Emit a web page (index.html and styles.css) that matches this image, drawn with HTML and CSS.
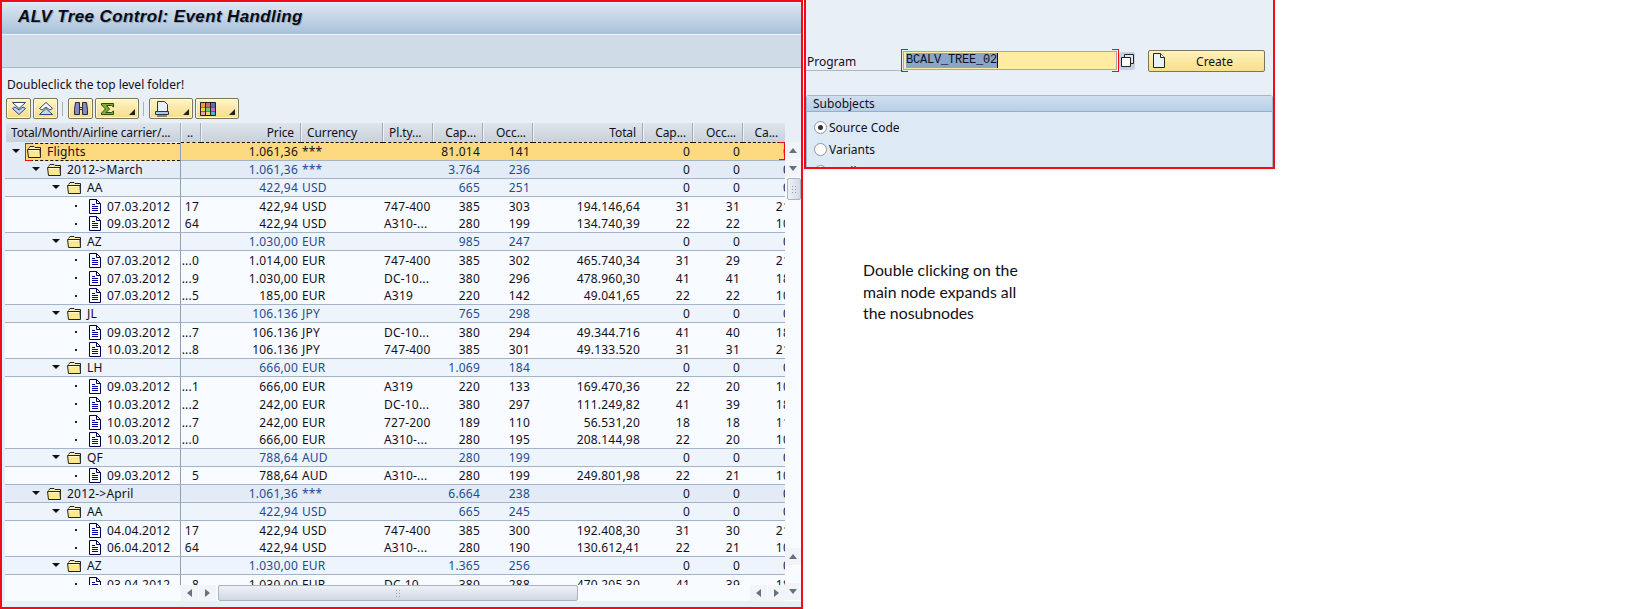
FILE: index.html
```html
<!DOCTYPE html>
<html lang="en">
<head>
  <meta charset="UTF-8">
  <title>ALV Tree Control: Event Handling</title>
  <link rel="stylesheet" href="styles.css">
</head>
<body>

<svg class="defs" width="0" height="0">
  <symbol id="folder" viewBox="0 0 15 13">
    <path d="M1.500 3.500 3 1.500h4l1 1h5.500v9" fill="#fdf0a8" stroke="#222"/>
    <path d="M.5 4.500h12.500l.5 8H1.500z" fill="#fde98c" stroke="#222"/>
    <path d="M2 5.500h10" stroke="#fffbd8"/>
  </symbol>
  <symbol id="doc" viewBox="0 0 12 15">
    <path d="M.5.5h7l4 4v10H.5z" fill="#fff" stroke="#00004e"/>
    <path d="M7.500.5v4h4" fill="none" stroke="#00004e"/>
    <path d="M3 5.500h3M3 7.500h6M3 9.500h6M3 11.500h6" fill="none" stroke="#0000a0"/>
  </symbol>
  <symbol id="drop" viewBox="0 0 6 6">
    <path d="M6 0v6H0z" fill="#222"/>
  </symbol>
</svg>

<div class="screen">
  <div class="titlebar">ALV Tree Control: Event Handling</div>
  <div class="appbar"></div>

  <div class="hint">Doubleclick the top level folder!</div>

  <div class="toolbar">
    <button class="tb"><svg width="16" height="15" viewBox="0 0 16 15"><path d="M1.500 1.500h13L8 7.500z" fill="#fff" stroke="#2c4a78"/><path d="M1.500 7.500 4 6l4 3 4-3 2.500 1.500L8 13.500z" fill="#c4d8ee" stroke="#2c4a78"/></svg></button>
    <button class="tb"><svg width="16" height="15" viewBox="0 0 16 15"><path d="M1.500 13.500h13L8 7.500z" fill="#c4d8ee" stroke="#2c4a78"/><path d="M1.500 7.500 4 9l4-3 4 3 2.500-1.500L8 1.500z" fill="#fff" stroke="#2c4a78"/></svg></button>
    <span class="sep"></span>
    <button class="tb"><svg width="16" height="15" viewBox="0 0 16 15"><path d="M2.500 1.500h4v12h-5v-5zM9.500 1.500h4l1 7v5h-5z" fill="#8489c4" stroke="#26264e"/><path d="M6.500 6.500h3v2h-3z" fill="#e4e6f6" stroke="#26264e"/></svg></button>
    <button class="tb tb-menu"><svg width="15" height="14" viewBox="0 0 15 14"><path d="M1.500 1.500h12v3.500l-2-1.500H6.500L9.500 7 6 10.500h5.500l2-1.500v3.500h-12v-1.500L5.500 7l-4-4z" fill="#7cb02e" stroke="#2c4a10"/></svg><svg class="drop"><use href="#drop"/></svg></button>
    <span class="sep"></span>
    <button class="tb tb-menu"><svg width="16" height="16" viewBox="0 0 16 16"><path d="M3.500.5h7l3 3v7h-10z" fill="#e8f0fa" stroke="#26364f"/><path d="M1.500 10.500h13v3h-13z" fill="#b6c8de" stroke="#26364f"/><path d="M3 15h10" stroke="#26364f"/></svg><svg class="drop"><use href="#drop"/></svg></button>
    <button class="tb tb-menu"><svg width="16" height="14" viewBox="0 0 16 14"><path d="M.5.500h15v13H.5z" fill="#222" stroke="#222"/><path d="M1 1h4v4H1z" fill="#f0a030"/><path d="M6 1h4v4H6z" fill="#c86a6a"/><path d="M11 1h4v4h-4z" fill="#5a6ac8"/><path d="M1 5.500h4v3.500H1z" fill="#f0d050"/><path d="M6 5.500h4v3.500H6z" fill="#70c870"/><path d="M11 5.500h4v3.500h-4z" fill="#c070c0"/><path d="M1 9.500h4V13H1z" fill="#f4a0a0"/><path d="M6 9.500h4V13H6z" fill="#e0e060"/><path d="M11 9.500h4V13h-4z" fill="#50b0e0"/></svg><svg class="drop"><use href="#drop"/></svg></button>
  </div>

  <div class="alv">
    <div class="alv-main">
      <div class="grid-clip">
        <table class="grid">
          <colgroup>
            <col class="c-tree"><col class="c-dots"><col class="c-price"><col class="c-cur"><col class="c-n"><col class="c-n"><col class="c-n"><col class="c-total"><col class="c-n"><col class="c-n"><col class="c-last">
          </colgroup>
          <thead>
            <tr><th>Total/Month/Airline carrier/...</th><th>..</th><th>Price</th><th>Currency</th><th>Pl.ty...</th><th>Cap...</th><th>Occ...</th><th>Total</th><th>Cap...</th><th>Occ...</th><th>Ca...</th></tr>
          </thead>
          <tbody>
            <tr class="selected"><td><div class="tree"><i class="tw tw0"></i><div class="focus"><svg class="ico"><use href="#folder"/></svg>Flights</div></div></td><td></td><td>1.061,36</td><td>***</td><td></td><td>81.014</td><td>141</td><td></td><td>0</td><td>0</td><td>0</td></tr>
            <tr class="node top"><td><div class="tree lv1"><i class="tw"></i><svg class="ico"><use href="#folder"/></svg>2012-&gt;March</div></td><td></td><td>1.061,36</td><td>***</td><td></td><td>3.764</td><td>236</td><td></td><td>0</td><td>0</td><td>0</td></tr>
            <tr class="node"><td><div class="tree lv2"><i class="tw"></i><svg class="ico"><use href="#folder"/></svg>AA</div></td><td></td><td>422,94</td><td>USD</td><td></td><td>665</td><td>251</td><td></td><td>0</td><td>0</td><td>0</td></tr>
            <tr><td><div class="tree lv3"><i class="dot"></i><svg class="doc"><use href="#doc"/></svg>07.03.2012</div></td><td>17</td><td>422,94</td><td>USD</td><td>747-400</td><td>385</td><td>303</td><td>194.146,64</td><td>31</td><td>31</td><td>21</td></tr>
            <tr><td><div class="tree lv3"><i class="dot"></i><svg class="doc"><use href="#doc"/></svg>09.03.2012</div></td><td>64</td><td>422,94</td><td>USD</td><td>A310-...</td><td>280</td><td>199</td><td>134.740,39</td><td>22</td><td>22</td><td>10</td></tr>
            <tr class="node"><td><div class="tree lv2"><i class="tw"></i><svg class="ico"><use href="#folder"/></svg>AZ</div></td><td></td><td>1.030,00</td><td>EUR</td><td></td><td>985</td><td>247</td><td></td><td>0</td><td>0</td><td>0</td></tr>
            <tr><td><div class="tree lv3"><i class="dot"></i><svg class="doc"><use href="#doc"/></svg>07.03.2012</div></td><td>...0</td><td>1.014,00</td><td>EUR</td><td>747-400</td><td>385</td><td>302</td><td>465.740,34</td><td>31</td><td>29</td><td>21</td></tr>
            <tr><td><div class="tree lv3"><i class="dot"></i><svg class="doc"><use href="#doc"/></svg>07.03.2012</div></td><td>...9</td><td>1.030,00</td><td>EUR</td><td>DC-10...</td><td>380</td><td>296</td><td>478.960,30</td><td>41</td><td>41</td><td>18</td></tr>
            <tr><td><div class="tree lv3"><i class="dot"></i><svg class="doc"><use href="#doc"/></svg>07.03.2012</div></td><td>...5</td><td>185,00</td><td>EUR</td><td>A319</td><td>220</td><td>142</td><td>49.041,65</td><td>22</td><td>22</td><td>10</td></tr>
            <tr class="node"><td><div class="tree lv2"><i class="tw"></i><svg class="ico"><use href="#folder"/></svg>JL</div></td><td></td><td>106.136</td><td>JPY</td><td></td><td>765</td><td>298</td><td></td><td>0</td><td>0</td><td>0</td></tr>
            <tr><td><div class="tree lv3"><i class="dot"></i><svg class="doc"><use href="#doc"/></svg>09.03.2012</div></td><td>...7</td><td>106.136</td><td>JPY</td><td>DC-10...</td><td>380</td><td>294</td><td>49.344.716</td><td>41</td><td>40</td><td>18</td></tr>
            <tr><td><div class="tree lv3"><i class="dot"></i><svg class="doc"><use href="#doc"/></svg>10.03.2012</div></td><td>...8</td><td>106.136</td><td>JPY</td><td>747-400</td><td>385</td><td>301</td><td>49.133.520</td><td>31</td><td>31</td><td>21</td></tr>
            <tr class="node"><td><div class="tree lv2"><i class="tw"></i><svg class="ico"><use href="#folder"/></svg>LH</div></td><td></td><td>666,00</td><td>EUR</td><td></td><td>1.069</td><td>184</td><td></td><td>0</td><td>0</td><td>0</td></tr>
            <tr><td><div class="tree lv3"><i class="dot"></i><svg class="doc"><use href="#doc"/></svg>09.03.2012</div></td><td>...1</td><td>666,00</td><td>EUR</td><td>A319</td><td>220</td><td>133</td><td>169.470,36</td><td>22</td><td>20</td><td>10</td></tr>
            <tr><td><div class="tree lv3"><i class="dot"></i><svg class="doc"><use href="#doc"/></svg>10.03.2012</div></td><td>...2</td><td>242,00</td><td>EUR</td><td>DC-10...</td><td>380</td><td>297</td><td>111.249,82</td><td>41</td><td>39</td><td>18</td></tr>
            <tr><td><div class="tree lv3"><i class="dot"></i><svg class="doc"><use href="#doc"/></svg>10.03.2012</div></td><td>...7</td><td>242,00</td><td>EUR</td><td>727-200</td><td>189</td><td>110</td><td>56.531,20</td><td>18</td><td>18</td><td>11</td></tr>
            <tr><td><div class="tree lv3"><i class="dot"></i><svg class="doc"><use href="#doc"/></svg>10.03.2012</div></td><td>...0</td><td>666,00</td><td>EUR</td><td>A310-...</td><td>280</td><td>195</td><td>208.144,98</td><td>22</td><td>20</td><td>10</td></tr>
            <tr class="node"><td><div class="tree lv2"><i class="tw"></i><svg class="ico"><use href="#folder"/></svg>QF</div></td><td></td><td>788,64</td><td>AUD</td><td></td><td>280</td><td>199</td><td></td><td>0</td><td>0</td><td>0</td></tr>
            <tr><td><div class="tree lv3"><i class="dot"></i><svg class="doc"><use href="#doc"/></svg>09.03.2012</div></td><td>5</td><td>788,64</td><td>AUD</td><td>A310-...</td><td>280</td><td>199</td><td>249.801,98</td><td>22</td><td>21</td><td>10</td></tr>
            <tr class="node top"><td><div class="tree lv1"><i class="tw"></i><svg class="ico"><use href="#folder"/></svg>2012-&gt;April</div></td><td></td><td>1.061,36</td><td>***</td><td></td><td>6.664</td><td>238</td><td></td><td>0</td><td>0</td><td>0</td></tr>
            <tr class="node"><td><div class="tree lv2"><i class="tw"></i><svg class="ico"><use href="#folder"/></svg>AA</div></td><td></td><td>422,94</td><td>USD</td><td></td><td>665</td><td>245</td><td></td><td>0</td><td>0</td><td>0</td></tr>
            <tr><td><div class="tree lv3"><i class="dot"></i><svg class="doc"><use href="#doc"/></svg>04.04.2012</div></td><td>17</td><td>422,94</td><td>USD</td><td>747-400</td><td>385</td><td>300</td><td>192.408,30</td><td>31</td><td>30</td><td>21</td></tr>
            <tr><td><div class="tree lv3"><i class="dot"></i><svg class="doc"><use href="#doc"/></svg>06.04.2012</div></td><td>64</td><td>422,94</td><td>USD</td><td>A310-...</td><td>280</td><td>190</td><td>130.612,41</td><td>22</td><td>21</td><td>10</td></tr>
            <tr class="node"><td><div class="tree lv2"><i class="tw"></i><svg class="ico"><use href="#folder"/></svg>AZ</div></td><td></td><td>1.030,00</td><td>EUR</td><td></td><td>1.365</td><td>256</td><td></td><td>0</td><td>0</td><td>0</td></tr>
            <tr><td><div class="tree lv3"><i class="dot"></i><svg class="doc"><use href="#doc"/></svg>03.04.2012</div></td><td>8</td><td>1.030,00</td><td>EUR</td><td>DC-10...</td><td>380</td><td>288</td><td>470.205,30</td><td>41</td><td>39</td><td>18</td></tr>
          </tbody>
        </table>
        <span class="focus-end"></span>
      </div>
      <div class="hbar">
        <span class="sb-btn"><i class="ar-l"></i></span>
        <span class="sb-btn"><i class="ar-r"></i></span>
        <span class="hthumb"><i class="grip"></i></span>
        <span class="sb-fill"></span>
        <span class="sb-btn"><i class="ar-l"></i></span>
        <span class="sb-btn"><i class="ar-r"></i></span>
      </div>
    </div>
    <div class="vbar">
      <span class="sb-btn-v"><i class="ar-u"></i></span>
      <span class="sb-btn-v"><i class="ar-d"></i></span>
      <span class="vthumb"><i class="grip"></i></span>
      <span class="sb-fill"></span>
      <span class="sb-btn-v"><i class="ar-u"></i></span>
      <span class="sb-btn-v"><i class="ar-d"></i></span>
    </div>
  </div>
</div>

<div class="side">
  <div class="se38">
    <div class="prog-row">
      <label class="prog-label">Program</label>
      <div class="prog-field"><span class="prog-sel">BCALV_TREE_02</span></div>
      <span class="f4"><svg width="13" height="13" viewBox="0 0 13 13"><path d="M3.500.5h9v9h-9z" fill="#dfe8f2" stroke="#222"/><path d="M.5 3.500h9v9h-9z" fill="#fff" stroke="#222"/></svg></span>
      <button class="create"><svg class="create-ico" width="12" height="15" viewBox="0 0 12 15"><path d="M.5.5h7l4 4v10H.5z" fill="#e8f2fb" stroke="#222"/><path d="M7.500.5v4h4" fill="#fff" stroke="#222"/></svg><span class="create-txt">Create</span></button>
    </div>
    <div class="subobjects">
      <div class="sub-head">Subobjects</div>
      <div class="radio-row"><i class="radio on"></i>Source Code</div>
      <div class="radio-row"><i class="radio"></i>Variants</div>
      <div class="radio-row"><i class="radio"></i>Attributes</div>
    </div>
  </div>
  <p class="note">Double clicking on the<br>main node expands all<br>the nosubnodes</p>
</div>

</body>
</html>
```

FILE: styles.css
```css
* {
  box-sizing: border-box;
}
html, body {
  margin: 0;
  height: 100%;
  overflow: hidden;
}
body {
  display: flex;
  background: #fff;
  font-family: "Noto Sans", Tahoma, sans-serif;
  font-size: 12px;
  color: #10101c;
}
.defs {
  position: absolute;
}

/* left screen */
.screen {
  width: 803px;
  height: 609px;
  margin-right: 1px;
  border: 2px solid #f20a14;
  background: #e9eff7;
  display: flex;
  flex-direction: column;
}
.titlebar {
  height: 32px;
  margin-top: 1px;
  padding: 0 0 4px 16px;
  display: flex;
  align-items: center;
  background: linear-gradient(#dde7f1, #a8c1da);
  border-bottom: 1px solid #eef3f8;
  font-family: "Liberation Sans", Arial, sans-serif;
  font-size: 17px;
  font-weight: bold;
  font-style: italic;
  letter-spacing: 0.38px;
  color: #0a0a14;
  text-shadow: 1px 1px 0 #8fa8c0;
}
.appbar {
  height: 33px;
  background: #cfdce7;
  border-bottom: 1px solid #a6b6c6;
}
.hint {
  height: 17px;
  margin-top: 8px;
  padding-left: 5px;
  line-height: 17px;
}
.toolbar {
  display: flex;
  align-items: center;
  height: 21px;
  margin-top: 5px;
  padding-left: 4px;
  gap: 2px;
}
.tb {
  position: relative;
  width: 25px;
  height: 21px;
  padding: 0;
  display: flex;
  align-items: center;
  justify-content: center;
  background: linear-gradient(#fff4c6, #f8dc88);
  border: 1px solid #7d7558;
  border-radius: 2px;
  box-shadow: inset 0 0 0 1px #fffbe4;
}
.tb-menu {
  width: 44px;
  justify-content: flex-start;
  padding-left: 4px;
}
.drop {
  position: absolute;
  right: 3px;
  bottom: 3px;
  width: 6px;
  height: 6px;
}
.sep {
  width: 1px;
  height: 14px;
  margin: 0 3px 0 2px;
  background: #a9b0b8;
}

/* tree grid */
.alv {
  display: flex;
  margin-top: 4px;
  margin-left: 3px;
}
.alv-main {
  width: 780px;
}
.grid-clip {
  position: relative;
  height: 462px;
  overflow: hidden;
}
.grid {
  width: 800px;
  table-layout: fixed;
  border-collapse: separate;
  border-spacing: 0;
}
.c-tree { width: 176px; }
.c-dots { width: 20px; }
.c-price { width: 100px; }
.c-cur { width: 82px; }
.c-n { width: 50px; }
.c-total { width: 110px; }
.c-last { width: 62px; }
.grid th {
  height: 19px;
  padding: 0 6px 0 0;
  overflow: hidden;
  white-space: nowrap;
  font-weight: normal;
  letter-spacing: -0.1px;
  text-align: right;
  background: linear-gradient(#e0e5ec, #c8d0d9);
  border-right: 1px solid #a3adb9;
  box-shadow: inset 1px 0 0 #eef1f5;
}
.grid th:nth-child(1),
.grid th:nth-child(4),
.grid th:nth-child(5) {
  text-align: left;
  padding-left: 6px;
}
.grid th:nth-child(1) {
  letter-spacing: -0.15px;
}
.grid th:nth-child(2) {
  padding: 0 0 0 6px;
  text-align: left;
}
.grid th:nth-child(11) {
  padding-right: 26px;
}
.grid td {
  height: 18px;
  padding: 0 3px;
  overflow: hidden;
  white-space: nowrap;
  line-height: 17px;
  letter-spacing: 0.2px;
  text-align: right;
  background: #f8fbff;
}
.grid td:nth-child(1) {
  padding: 0;
  text-align: left;
  border-right: 1px solid #8d9fb5;
}
.grid td:nth-child(2) {
  padding: 0 2px 0 0;
}
.grid td:nth-child(4),
.grid td:nth-child(5) {
  padding: 0 0 0 1px;
  text-align: left;
}
.grid td:nth-child(11) {
  padding-right: 15px;
}
.grid tr:has(+ .node) td,
.grid .node td {
  border-bottom: 1px solid #a3b4c8;
}
.grid .node td {
  background: #eef4fb;
  color: #1f4c94;
}
.grid .node.top td {
  background: #e2ebf6;
}
.grid .node td:nth-child(1),
.grid .node td:nth-child(n+8) {
  color: #10101c;
}
.grid .selected td {
  background: #fdd97f;
  border-top: 1px dashed #111;
  border-bottom: 1px dashed #111;
}
.grid .selected td:nth-child(1) {
  background: #e2ebf6;
  border-top: 0;
  border-bottom: 0;
}

.tree {
  display: flex;
  align-items: center;
  height: 17px;
  padding-left: 7px;
}
.selected .tree {
  height: 18px;
}
.lv1 { padding-left: 27px; }
.lv2 { padding-left: 47px; }
.lv3 { padding-left: 70px; }
.tw {
  width: 0;
  height: 0;
  margin-right: 7px;
  margin-bottom: 2px;
  border-left: 4px solid transparent;
  border-right: 4px solid transparent;
  border-top: 4px solid #111;
  flex: none;
}
.tw0 {
  margin-right: 0;
}
.ico {
  width: 15px;
  height: 13px;
  margin-right: 5px;
  flex: none;
}
.doc {
  width: 12px;
  height: 15px;
  margin-right: 6px;
  flex: none;
}
.dot {
  width: 2px;
  height: 2px;
  margin-right: 12px;
  background: #222;
  flex: none;
}
.focus {
  position: relative;
  flex: 1;
  height: 18px;
  margin-left: 5px;
  padding-left: 2px;
  display: flex;
  align-items: center;
  background: #fdd97f;
  border-top: 1px dashed #111;
  border-bottom: 1px dashed #111;
}
.focus::before {
  content: "";
  position: absolute;
  left: 0;
  top: -1px;
  bottom: -1px;
  width: 6px;
  border: 1px solid #f20a14;
  border-right: 0;
}
.focus-end {
  position: absolute;
  right: 0;
  top: 19px;
  width: 6px;
  height: 18px;
  border: 1px solid #f20a14;
  border-left: 0;
}

/* scrollbars */
.sb-fill {
  flex: 1;
}
.hbar {
  display: flex;
  height: 16px;
  padding-left: 176px;
  gap: 1px;
  background: #f8fbff;
}
.sb-btn {
  width: 17px;
  height: 16px;
  display: flex;
  align-items: center;
  justify-content: center;
  background: #f1f4f9;
}
.hthumb {
  width: 360px;
  margin-left: 1px;
  display: flex;
  align-items: center;
  justify-content: center;
  border: 1px solid #a8b4c2;
  border-radius: 2px;
  background: linear-gradient(#eef2f7, #cfd8e2);
}
.vbar {
  display: flex;
  flex-direction: column;
  width: 17px;
  height: 459px;
  margin-top: 19px;
  background: #f8fbff;
}
.sb-btn-v {
  height: 18px;
  display: flex;
  align-items: center;
  justify-content: center;
  background: #f1f4f9;
  border-bottom: 1px solid #fff;
}
.vbar .sb-btn-v:nth-last-child(2) {
  margin-bottom: 17px;
}
.vthumb {
  width: 14px;
  height: 22px;
  margin: 0 0 0 2px;
  display: flex;
  align-items: center;
  justify-content: center;
  border: 1px solid #a8b4c2;
  border-radius: 2px;
  background: linear-gradient(90deg, #eef2f7, #d2dbe5);
}
.grip {
  width: 6px;
  height: 9px;
  background: radial-gradient(circle, #93a3b5 1px, transparent 1px) 0 0 / 3px 3px;
}
.ar-u, .ar-d, .ar-l, .ar-r {
  width: 0;
  height: 0;
  border: 4px solid transparent;
}
.ar-u {
  border-bottom: 5px solid #66727e;
  border-top: 0;
}
.ar-d {
  border-top: 5px solid #66727e;
  border-bottom: 0;
}
.ar-l {
  border-right: 5px solid #66727e;
  border-left: 0;
}
.ar-r {
  border-left: 5px solid #66727e;
  border-right: 0;
}

/* right side */
.side {
  width: 471px;
}
.se38 {
  height: 169px;
  overflow: hidden;
  background: #e9eff7;
  border: 2px solid #f20a14;
  border-top: 0;
}
.prog-row {
  display: flex;
  align-items: center;
  height: 21px;
  margin-top: 50px;
}
.prog-label {
  width: 97px;
  height: 21px;
  padding-left: 1px;
  line-height: 24px;
  border-bottom: 1px solid #aeb8c2;
}
.prog-field {
  position: relative;
  width: 214px;
  height: 19px;
  padding-left: 2px;
  display: flex;
  align-items: center;
  background: #ffeca2;
  border: 1px solid #a8a8a0;
  font-family: "Liberation Mono", "Courier New", monospace;
  font-size: 12px;
  letter-spacing: -0.2px;
}
.prog-field::before,
.prog-field::after {
  content: "";
  position: absolute;
  top: -3px;
  bottom: -3px;
  width: 6px;
  border: 1px solid #f20a14;
}
.prog-field::before {
  left: -3px;
  border-right: 0;
}
.prog-field::after {
  right: -3px;
  border-left: 0;
}
.prog-sel {
  height: 15px;
  line-height: 15px;
  background: #8aa5c8;
  border-right: 1px solid #111;
}
.f4 {
  width: 16px;
  height: 18px;
  margin-left: 2px;
  display: flex;
  align-items: center;
  justify-content: center;
  background: #c3d2e2;
  border-radius: 2px;
}
.create {
  width: 117px;
  height: 22px;
  margin-left: 13px;
  padding: 1px 0 0 4px;
  display: flex;
  align-items: center;
  background: linear-gradient(#fff2bd, #f9de8c);
  border: 1px solid #7d7558;
  border-radius: 2px;
  font: inherit;
  color: inherit;
}
.create-ico {
  margin-top: -1px;
}
.create-txt {
  flex: 1;
  text-align: center;
}
.subobjects {
  margin-top: 24px;
  background: #dde9f5;
  border: 1px solid #9cb8d6;
  border-bottom: 0;
  border-radius: 3px 3px 0 0;
  height: 90px;
}
.sub-head {
  height: 16px;
  padding-left: 6px;
  line-height: 15px;
  background: linear-gradient(#cfdfef, #b8cfe6);
  border-bottom: 1px solid #8fb0d0;
}
.radio-row {
  display: flex;
  align-items: center;
  height: 22px;
  padding-left: 7px;
}
.radio-row:nth-child(2) {
  margin-top: 4px;
}
.radio {
  position: relative;
  width: 13px;
  height: 13px;
  margin-right: 2px;
  background: #fff;
  border: 1px solid #8c96a2;
  border-radius: 50%;
}
.radio.on::after {
  content: "";
  position: absolute;
  left: 3px;
  top: 3px;
  width: 5px;
  height: 5px;
  border-radius: 50%;
  background: #333;
}
.note {
  margin: 90px 0 0 59px;
  font-family: Lato, "Open Sans", sans-serif;
  font-size: 15.800px;
  line-height: 21.500px;
  color: #0f0f18;
}
```
